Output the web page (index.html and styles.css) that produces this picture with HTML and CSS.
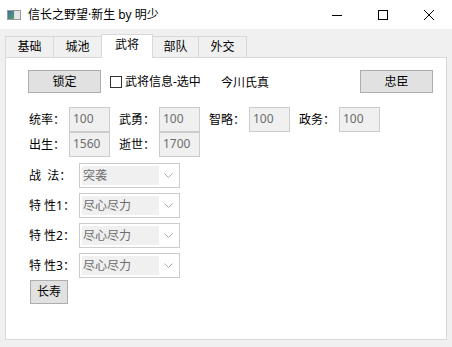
FILE: index.html
```html
<!DOCTYPE html>
<html lang="zh">
<head>
<meta charset="utf-8">
<title>信长之野望·新生 by 明少</title>
<link rel="stylesheet" href="styles.css">
</head>
<body>
<div class="window">
  <div class="titlebar">
    <svg class="app-icon" width="14" height="10" viewBox="0 0 14 10">
      <defs>
        <linearGradient id="g" x1="0" y1="0" x2="1" y2="1">
          <stop offset="0" stop-color="#3a6ea5"/>
          <stop offset="1" stop-color="#5aa36a"/>
        </linearGradient>
      </defs>
      <rect x="0.5" y="0.5" width="13" height="9" fill="#d8d8d8" stroke="#9a9a9a"/>
      <rect x="1" y="1" width="6" height="8" fill="url(#g)"/>
      <rect x="8" y="1" width="5" height="8" fill="#e6e6e6"/>
    </svg>
    <span class="title">信长之野望·新生 by 明少</span>
    <div class="controls">
      <span class="ctl"><svg width="10" height="10" viewBox="0 0 10 10"><line x1="0" y1="5.5" x2="10" y2="5.5" stroke="#000" stroke-width="1"/></svg></span>
      <span class="ctl"><svg width="10" height="10" viewBox="0 0 10 10"><rect x="0.5" y="0.5" width="9" height="9" fill="none" stroke="#000" stroke-width="1"/></svg></span>
      <span class="ctl"><svg width="10" height="10" viewBox="0 0 10 10"><path d="M0 0L10 10M10 0L0 10" stroke="#000" stroke-width="1"/></svg></span>
    </div>
  </div>
  <div class="tabs">
    <div class="tab w48">基础</div>
    <div class="tab w49">城池</div>
    <div class="tab active w52">武将</div>
    <div class="tab w47">部队</div>
    <div class="tab w48">外交</div>
  </div>
  <div class="panel">
    <div class="top-row">
      <button class="btn btn-wide">锁定</button>
      <label class="check"><span class="box"></span><span>武将信息-选中</span></label>
      <span class="name">今川氏真</span>
      <button class="btn btn-wide btn-right">忠臣</button>
    </div>
    <div class="stats">
      <div class="stat-row">
        <span class="lbl">统率：</span><span class="field">100</span>
        <span class="lbl">武勇：</span><span class="field">100</span>
        <span class="lbl">智略：</span><span class="field">100</span>
        <span class="lbl">政务：</span><span class="field">100</span>
      </div>
      <div class="stat-row">
        <span class="lbl">出生：</span><span class="field">1560</span>
        <span class="lbl">逝世：</span><span class="field">1700</span>
      </div>
    </div>
    <div class="combos">
      <div class="combo-row">
        <span class="clbl">战&nbsp;&nbsp;法：</span>
        <div class="combo"><span class="combo-val">突袭</span><span class="chev"><svg width="9" height="5" viewBox="0 0 9 5"><path d="M0.5 0.5L4.5 4.5L8.5 0.5" fill="none" stroke="#a8a8a8"/></svg></span></div>
      </div>
      <div class="combo-row">
        <span class="clbl">特&nbsp;性1：</span>
        <div class="combo"><span class="combo-val">尽心尽力</span><span class="chev"><svg width="9" height="5" viewBox="0 0 9 5"><path d="M0.5 0.5L4.5 4.5L8.5 0.5" fill="none" stroke="#a8a8a8"/></svg></span></div>
      </div>
      <div class="combo-row">
        <span class="clbl">特&nbsp;性2：</span>
        <div class="combo"><span class="combo-val">尽心尽力</span><span class="chev"><svg width="9" height="5" viewBox="0 0 9 5"><path d="M0.5 0.5L4.5 4.5L8.5 0.5" fill="none" stroke="#a8a8a8"/></svg></span></div>
      </div>
      <div class="combo-row">
        <span class="clbl">特&nbsp;性3：</span>
        <div class="combo"><span class="combo-val">尽心尽力</span><span class="chev"><svg width="9" height="5" viewBox="0 0 9 5"><path d="M0.5 0.5L4.5 4.5L8.5 0.5" fill="none" stroke="#a8a8a8"/></svg></span></div>
      </div>
    </div>
    <button class="btn btn-small">长寿</button>
  </div>
</div>
</body>
</html>
```

FILE: styles.css
```css
* { box-sizing: border-box; }
html, body { margin: 0; padding: 0; }
body {
  width: 452px;
  height: 347px;
  background: #f0f0f0;
  font-family: "Noto Sans", "Noto Sans CJK SC", sans-serif;
  font-size: 12px;
  color: #000;
  overflow: hidden;
}
.window { width: 452px; height: 347px; display: flex; flex-direction: column; }

.titlebar {
  height: 29px;
  background: #fff;
  display: flex;
  align-items: center;
  flex-shrink: 0;
}
.app-icon { margin-left: 7px; display: block; }
.title { margin-left: 7px; font-size: 12px; line-height: 16px; }
.controls { margin-left: auto; display: flex; height: 29px; }
.ctl { width: 46px; height: 29px; display: flex; align-items: center; justify-content: center; }
.ctl svg { display: block; }

.tabs {
  height: 28px;
  display: flex;
  align-items: flex-end;
  padding-left: 5px;
  flex-shrink: 0;
}
.tab {
  height: 21px;
  border: 1px solid #d9d9d9;
  border-bottom: none;
  margin-right: -1px;
  display: flex;
  align-items: center;
  justify-content: center;
  line-height: 16px;
  background: #f0f0f0;
}
.tab.active {
  height: 24px;
  margin-bottom: -1px;
  background: #fff;
  position: relative;
  z-index: 1;
  padding-bottom: 3px;
}
.w47 { width: 47px; }
.w48 { width: 49px; }
.w49 { width: 49px; }
.w52 { width: 52px; }

.panel {
  margin-left: 5px;
  width: 442px;
  height: 283px;
  background: #fff;
  border: 1px solid #d9d9d9;
  padding: 12px 13px 0 0;
  display: flex;
  flex-direction: column;
  align-items: flex-start;
  flex-shrink: 0;
}

.top-row {
  display: flex;
  align-items: center;
  height: 23px;
  padding-left: 22px;
  width: 100%;
}
.btn {
  font-family: inherit;
  font-size: 12px;
  color: #000;
  background: #e1e1e1;
  border: 1px solid #adadad;
  padding: 0;
  margin: 0;
  line-height: 16px;
}
.btn-wide { width: 73px; height: 23px; }
.btn-right { margin-left: auto; }
.check { display: flex; align-items: center; margin-left: 9px; line-height: 16px; }
.box { width: 12px; height: 12px; border: 1px solid #333; background: #fff; margin-right: 3px; }
.name { margin-left: 20px; line-height: 16px; padding-top: 2px; }

.stats { margin-top: 14px; padding-left: 23px; }
.stat-row { display: flex; align-items: center; height: 25px; }
.lbl { width: 40px; line-height: 16px; }
.field {
  width: 41px;
  height: 25px;
  border: 1px solid #cccccc;
  background: #f0f0f0;
  color: #6d6d6d;
  padding-left: 3px;
  line-height: 22px;
  margin-right: 9px;
}

.combos { margin-top: 6px; padding-left: 23px; display: flex; flex-direction: column; gap: 5px; }
.combo-row { display: flex; align-items: center; height: 25px; }
.clbl { width: 50px; line-height: 16px; }
.combo {
  width: 101px;
  height: 25px;
  border: 1px solid #cccccc;
  padding: 2px;
  display: flex;
  align-items: stretch;
}
.combo-val {
  width: 77px;
  background: #f0f0f0;
  color: #6d6d6d;
  padding-left: 1px;
  line-height: 19px;
}
.chev { flex: 1; display: flex; align-items: center; justify-content: center; padding-left: 1px; }
.chev svg { display: block; }

.btn-small { width: 38px; height: 24px; margin-top: 2px; margin-left: 24px; }
```
